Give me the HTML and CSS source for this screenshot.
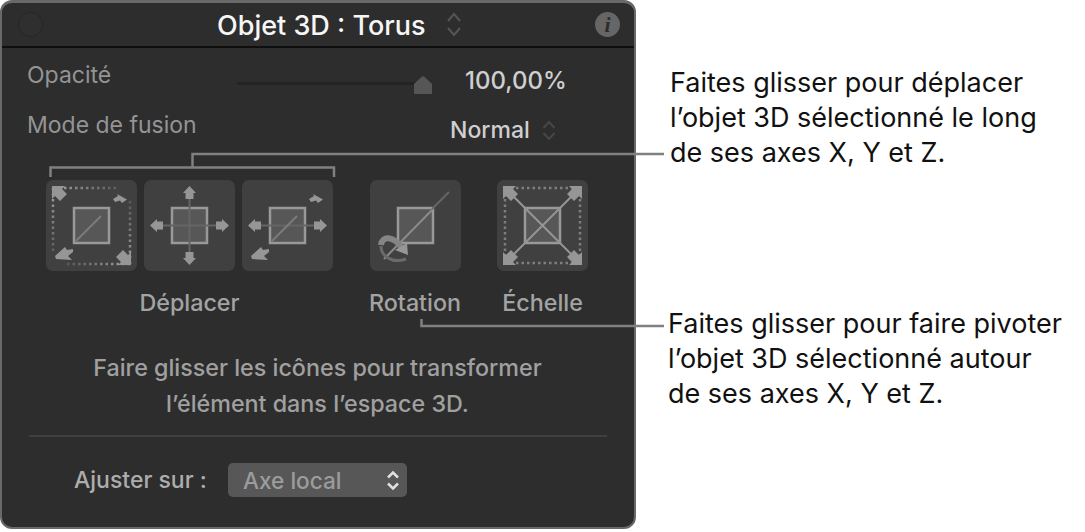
FILE: index.html
```html
<!DOCTYPE html>
<html lang="fr">
<head>
<meta charset="utf-8">
<title>Objet 3D : Torus</title>
<link rel="stylesheet" href="styles.css">
</head>
<body>
<svg width="0" height="0" class="defs" aria-hidden="true">
  <defs>
    <linearGradient id="fadeTL" gradientUnits="userSpaceOnUse" x1="8" y1="8" x2="52" y2="52">
      <stop offset="0" stop-color="#a0a0a0"/><stop offset="1" stop-color="#a0a0a0" stop-opacity="0.05"/>
    </linearGradient>
    <linearGradient id="fadeBR" gradientUnits="userSpaceOnUse" x1="84" y1="84" x2="44" y2="44">
      <stop offset="0" stop-color="#a0a0a0"/><stop offset="1" stop-color="#a0a0a0" stop-opacity="0.05"/>
    </linearGradient>
    <polygon id="arrow" points="0,0 7,-6.500 7,-4 13,-4 13,4 7,4 7,6.500"/>
    <polygon id="corner" points="0,0 13,0 10,3 15,8 8,15 3,10 0,13"/>
    <polygon id="far" points="67,19 72,16 71,14 81,19.500 76,23 74,20.500 69,22"/>
    <polygon id="near" points="9,76 19,67 21,70 27,69 27,72 22,76 26,80 10,79"/>
  </defs>
</svg>
<div class="page">
  <section class="panel">
    <header class="head">
      <span class="dot"></span>
      <h1 class="title">Objet 3D : Torus</h1>
      <svg class="chev" width="16" height="25" viewBox="0 0 16 25"><path d="M2 9 8 2l6 7M2 16l6 7 6-7"/></svg>
      <span class="info">i</span>
    </header>
    <div class="row row-opacity">
      <span class="label">Opacité</span>
      <div class="slider"><span class="track"></span><svg class="thumb" width="20" height="20" viewBox="0 0 20 20"><path d="M1 9 9 1.500Q10 1 11 1.500L19 9V18Q19 19 18 19H2Q1 19 1 18Z"/></svg></div>
      <span class="value">100,00%</span>
    </div>
    <div class="row row-mode">
      <span class="label">Mode de fusion</span>
      <span class="mode">Normal</span>
      <svg class="chev small" width="14" height="21" viewBox="0 0 14 21"><path d="M1.500 8 7 2l5.500 6M1.500 13 7 19l5.500-6"/></svg>
    </div>
    <div class="tools">
      <div class="group">
        <div class="icons">
          <svg class="tool" viewBox="0 0 91 91">
            <path class="dots" stroke="url(#fadeTL)" d="M7 8H72M7 8V72"/>
            <path class="dots" stroke="url(#fadeBR)" d="M84 84H20M84 84V20"/>
            <rect class="box" x="28" y="28" width="35" height="35"/>
            <path class="axis bright" d="M30 61 55 36"/>
            <use href="#corner" transform="translate(6 6)"/>
            <use href="#corner" transform="translate(85 85) rotate(180)"/>
            <use href="#far"/>
            <use href="#near"/>
          </svg>
          <svg class="tool" viewBox="0 0 91 91">
            <rect class="box" x="28" y="28" width="35" height="35"/>
            <path class="axis" d="M19 45.500H72M45.500 19V72"/>
            <use href="#arrow" transform="translate(6 45.500)"/>
            <use href="#arrow" transform="translate(85 45.500) rotate(180)"/>
            <use href="#arrow" transform="translate(45.500 6) rotate(90)"/>
            <use href="#arrow" transform="translate(45.500 85) rotate(-90)"/>
          </svg>
          <svg class="tool" viewBox="0 0 91 91">
            <rect class="box" x="28" y="28" width="35" height="35"/>
            <path class="axis" d="M19 45.500H72"/>
            <path class="axis bright" d="M30 61 55 36"/>
            <use href="#arrow" transform="translate(6 45.500)"/>
            <use href="#arrow" transform="translate(85 45.500) rotate(180)"/>
            <use href="#far"/>
            <use href="#near"/>
          </svg>
        </div>
        <span class="tool-label">Déplacer</span>
      </div>
      <div class="group">
        <svg class="tool" viewBox="0 0 91 91">
          <rect class="box" x="28" y="28" width="35" height="35"/>
          <path class="axis" d="M62 29 79 12"/>
          <path class="axis solid" d="M14 79 62 30"/>
          <path class="ring-low" d="M11 66C11 76 22 84 36 79"/>
          <path class="ring" d="M11 65C12 56 23 55 32 68"/>
          <polygon class="ringhead" points="25,70 37,63 38,75"/>
        </svg>
        <span class="tool-label">Rotation</span>
      </div>
      <div class="group">
        <svg class="tool" viewBox="0 0 91 91">
          <path class="dots plain" d="M8 8H83M8 8V83M83 8V83M8 83H83"/>
          <rect class="box" x="28" y="28" width="35" height="35"/>
          <path class="ray" d="M10 10 81 81M81 10 10 81"/>
          <use href="#corner" transform="translate(6 6)"/>
          <use href="#corner" transform="translate(85 6) rotate(90)"/>
          <use href="#corner" transform="translate(85 85) rotate(180)"/>
          <use href="#corner" transform="translate(6 85) rotate(-90)"/>
        </svg>
        <span class="tool-label">Échelle</span>
      </div>
    </div>
    <p class="hint">Faire glisser les icônes pour transformer<br>l’élément dans l’espace 3D.</p>
    <hr class="rule">
    <div class="snap">
      <span class="snap-label">Ajuster sur :</span>
      <div class="select">
        <span>Axe local</span>
        <svg class="updown" width="14" height="21" viewBox="0 0 14 21"><path d="M2 7.500 7 2.500l5 5M2 13.500l5 5 5-5"/></svg>
      </div>
    </div>
  </section>
  <aside class="notes">
    <p class="note note-move">Faites glisser pour déplacer<br>l’objet 3D sélectionné le long<br>de ses axes X, Y et Z.</p>
    <p class="note note-rotate">Faites glisser pour faire pivoter<br>l’objet 3D sélectionné autour<br>de ses axes X, Y et Z.</p>
  </aside>
  <svg class="leaders" width="1085" height="532" viewBox="0 0 1085 532">
    <path d="M50.500 177V167.500H334V177M192.500 167.500V154H664M421.500 319V326H664"/>
  </svg>
</div>
</body>
</html>
```
FILE: styles.css
```css
* { box-sizing: border-box; }
html, body { margin: 0; background: #fff; }
body { font-family: Inter, "Liberation Sans", sans-serif; width: 1085px; height: 532px; overflow: hidden; }
.defs { position: absolute; }
.page { position: relative; display: flex; width: 1085px; height: 532px; }

.panel {
  width: 636px; height: 529px; flex: none;
  background: #2d2d2d;
  border: 2px solid #696969; border-top-width: 3px;
  border-radius: 12px;
  color: #909090;
  display: flex; flex-direction: column;
}
.head {
  height: 45px; flex: none;
  border-bottom: 2px solid #0e0e0e;
  display: flex; align-items: center;
  padding: 0 14px 0 16px;
}
.dot { width: 25px; height: 25px; border-radius: 50%; background: #2f2f2f; border: 1px solid #262626; }
.title { margin: 2px 0 0 174px; font-size: 27px; font-weight: 500; color: #f6f6f6; line-height: 30px; white-space: nowrap; }
.chev { fill: none; stroke: #555; stroke-width: 2; margin-left: 20px; }
.chev.small { stroke: #474747; margin-left: 13px; }
.info {
  margin-left: auto; width: 25px; height: 25px; border-radius: 50%;
  background: #666; color: #2d2d2d;
  font: italic 700 22px/25px "Liberation Serif", serif; text-align: center;
}

.row { display: flex; align-items: center; padding-left: 25px; }
.label { font-size: 23px; line-height: 26px; color: #949494; }
.row-opacity { margin-top: 15px; height: 38px; }
.row-opacity .label { width: 210px; margin-top: -14px; }
.slider { width: 196px; height: 20px; display: flex; align-items: center; position: relative; }
.track { width: 180px; height: 3px; background: #232323; border-radius: 2px; margin-top: 2px; }
.thumb { position: absolute; left: 176px; top: 3px; fill: #565656; }
.value { margin: -4px 0 0 32px; font-size: 24px; font-weight: 500; color: #cfcfcf; }
.row-mode { margin-top: 16px; height: 26px; }
.row-mode .label { width: 423px; margin-top: -10px; }
.mode { font-size: 23px; font-weight: 500; color: #cfcfcf; width: 79px; white-space: nowrap; }

.tools { display: flex; gap: 36px; margin: 37px 0 0 44px; }
.group { display: flex; flex-direction: column; align-items: center; }
.icons { display: flex; gap: 7px; }
.tool { width: 91px; height: 91px; background: #404040; border-radius: 7px; fill: #969696; display: block; }
.tool-label { margin-top: 18px; font-size: 23.300px; line-height: 28px; font-weight: 500; color: #a3a3a3; white-space: nowrap; }
.box { fill: #575757; stroke: #999; stroke-width: 2.500; }
.axis { stroke: #656565; stroke-width: 2; fill: none; }
.axis.bright { stroke: #7c7c7c; }
.axis.solid { stroke: #8b8b8b; }
.ray { stroke: #959595; stroke-width: 2; fill: none; }
.dots { fill: none; stroke-width: 2.500; stroke-dasharray: 2.500 3; }
.dots.plain { stroke: #7f7f7f; }
.ring { fill: none; stroke: #858585; stroke-width: 6; }
.ring-low { fill: none; stroke: #6a6a6a; stroke-width: 3; }
.ringhead { fill: #969696; }

.hint { margin: 33px 0 0; text-align: center; font-size: 23.300px; line-height: 36px; font-weight: 500; color: #a0a0a0; padding-right: 1px; white-space: nowrap; }
.rule { margin: 13px 27px 0; height: 2px; border: 0; background: #3f3f3f; }
.snap { display: flex; align-items: center; margin: 26px 0 0 72px; }
.snap-label { width: 154px; font-size: 23px; font-weight: 500; color: #adadad; white-space: nowrap; }
.select {
  width: 179px; height: 34px; border-radius: 5px; background: #575757;
  display: flex; align-items: center; justify-content: space-between;
  padding: 0 7px 0 15px; font-size: 22.600px; font-weight: 500; color: #9c9c9c;
}
.updown { fill: none; stroke: #e0e0e0; stroke-width: 2.500; }

.notes { display: flex; flex-direction: column; }
.note { margin: 0; color: #111; font-size: 27px; line-height: 35px; white-space: nowrap; }
.note-move { margin: 65px 0 0 34px; }
.note-rotate { margin: 136px 0 0 32px; }

.leaders { position: absolute; left: 0; top: 0; pointer-events: none; }
.leaders path { fill: none; stroke: #808080; stroke-width: 2.500; }
```
